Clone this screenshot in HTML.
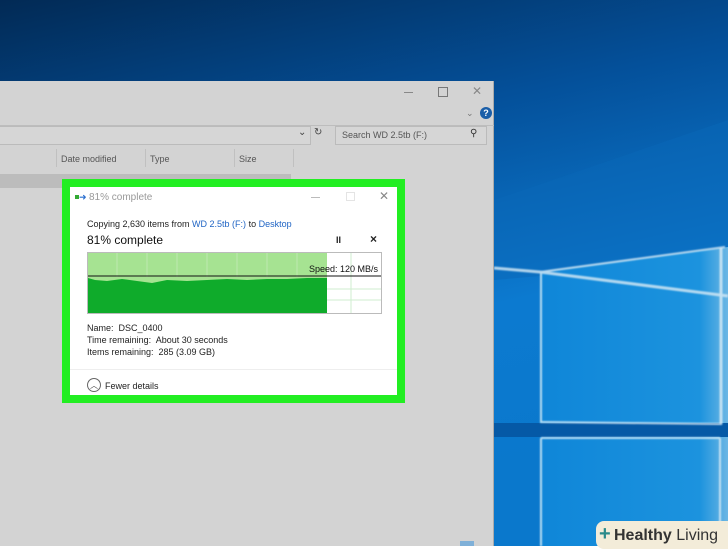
<!DOCTYPE html>
<html><head><meta charset="utf-8"><style>
body{margin:0;width:728px;height:546px;overflow:hidden;position:relative;font-family:"Liberation Sans",sans-serif;}
.abs{position:absolute}
.t{font-size:9px;color:#555}
</style></head><body>
<svg class="abs" style="left:0;top:0" width="728" height="546">
<defs>
<linearGradient id="bg" x1="0" y1="0" x2="0.3" y2="1"><stop offset="0" stop-color="#022a55"/><stop offset="0.35" stop-color="#04509a"/><stop offset="0.7" stop-color="#0c7ad0"/><stop offset="1" stop-color="#0a78cc"/></linearGradient>
<linearGradient id="pane" x1="0" y1="0" x2="1" y2="0"><stop offset="0" stop-color="#0f86d8"/><stop offset="0.85" stop-color="#1c93de"/><stop offset="1" stop-color="#6bb6e4"/></linearGradient>
<filter id="bl"><feGaussianBlur stdDeviation="0.8"/></filter>
</defs>
<rect width="728" height="546" fill="url(#bg)"/>
<polygon points="494,200 728,120 728,260 494,280" fill="#0a67b8" opacity="0.5"/>
<polygon points="540,272 728,247 728,423 540,423" fill="url(#pane)"/>
<rect x="494" y="423" width="234" height="14" fill="#0559a6"/>
<polygon points="540,437 728,437 728,546 540,546" fill="url(#pane)"/>
<g filter="url(#bl)" opacity="0.85">
<polyline points="494,268 540,272 728,296" stroke="#cfe6f4" stroke-width="3" fill="none"/>
<line x1="540" y1="272" x2="725" y2="247" stroke="#d6eaf6" stroke-width="2"/>
<line x1="541" y1="272" x2="541" y2="423" stroke="#d6eaf6" stroke-width="2"/>
<line x1="540" y1="422" x2="722" y2="424" stroke="#d6eaf6" stroke-width="2"/>
<line x1="721" y1="247" x2="721" y2="424" stroke="#d6eaf6" stroke-width="3"/>
<line x1="541" y1="438" x2="720" y2="438" stroke="#d6eaf6" stroke-width="2"/>
<line x1="541" y1="438" x2="541" y2="546" stroke="#d6eaf6" stroke-width="2"/>
<line x1="720" y1="438" x2="720" y2="546" stroke="#d6eaf6" stroke-width="2"/>
</g>
</svg>
<div class="abs" style="left:0;top:81px;width:494px;height:465px;background:#d3d3d3;border-right:1px solid #aaa;box-sizing:border-box">
 <div class="abs" style="left:404px;top:11px;width:9px;height:1px;background:#888"></div>
 <div class="abs" style="left:438px;top:6px;width:8px;height:8px;border:1px solid #777"></div>
 <div class="abs" style="left:472px;top:3px;font-size:12px;color:#888">✕</div>
 <div class="abs" style="left:466px;top:27px;font-size:9px;color:#777">⌄</div>
 <div class="abs" style="left:480px;top:26px;width:12px;height:12px;border-radius:50%;background:#1a5ea8;color:#fff;font-size:9px;text-align:center;line-height:12px;font-weight:bold">?</div>
 <div class="abs" style="left:0;top:44px;width:494px;height:1px;background:#bdbdbd"></div>
 <div class="abs" style="left:0;top:45px;width:310px;height:17px;border:1px solid #bbb;border-left:none;background:#d6d6d6"></div>
 <div class="abs" style="left:298px;top:46px;font-size:10px;color:#444">⌄</div>
 <div class="abs" style="left:314px;top:46px;font-size:10px;color:#444">↻</div>
 <div class="abs" style="left:335px;top:45px;width:150px;height:17px;border:1px solid #bbb;background:#d6d6d6"></div>
 <div class="abs t" style="left:342px;top:49px">Search WD 2.5tb (F:)</div>
 <div class="abs" style="left:470px;top:47px;font-size:10px;color:#333">⚲</div>
 <div class="abs t" style="left:61px;top:73px">Date modified</div>
 <div class="abs t" style="left:150px;top:73px">Type</div>
 <div class="abs t" style="left:239px;top:73px">Size</div>
 <div class="abs" style="left:56px;top:68px;width:1px;height:18px;background:#c0c0c0"></div>
 <div class="abs" style="left:145px;top:68px;width:1px;height:18px;background:#c0c0c0"></div>
 <div class="abs" style="left:234px;top:68px;width:1px;height:18px;background:#c0c0c0"></div>
 <div class="abs" style="left:293px;top:68px;width:1px;height:18px;background:#c0c0c0"></div>
 <div class="abs" style="left:0;top:93px;width:291px;height:14px;background:#bcbcbc"></div>
 <div class="abs" style="left:460px;top:460px;width:14px;height:5px;background:#7fb0d8"></div>
</div>
<div class="abs" style="left:62px;top:179px;width:343px;height:224px;background:#22ee22"></div>
<div class="abs" style="left:70px;top:187px;width:327px;height:208px;background:#fff;font-size:9px;color:#222">
 <div class="abs" style="left:5px;top:8px;width:4px;height:4px;background:#3a3"></div>
 <div class="abs" style="left:9px;top:5px;color:#2a6fd0;font-size:9px">➜</div>
 <div class="abs" style="left:19px;top:5px;color:#999;font-size:10px">81% complete</div>
 <div class="abs" style="left:241px;top:10px;width:9px;height:1px;background:#bbb"></div>
 <div class="abs" style="left:276px;top:5px;width:7px;height:7px;border:1px solid #e4e4e4"></div>
 <div class="abs" style="left:309px;top:2px;color:#888;font-size:12px">✕</div>
 <div class="abs" style="left:17px;top:32px">Copying 2,630 items from <span style="color:#1f64c4">WD 2.5tb (F:)</span> to <span style="color:#1f64c4">Desktop</span></div>
 <div class="abs" style="left:17px;top:46px;font-size:12px;color:#111">81% complete</div>
 <div class="abs" style="left:266px;top:48px;font-size:9px;font-weight:bold">II</div>
 <div class="abs" style="left:300px;top:45px;font-size:12px;font-weight:bold">×</div>
 <svg class="abs" style="left:17px;top:65px" width="295" height="62">
  <rect x="0.5" y="0.5" width="294" height="61" fill="#fff" stroke="#bbb"/>
  <rect x="1" y="1" width="239" height="60" fill="#a6e392"/>
  <g stroke="#bfe8b0" stroke-width="1">
   <line x1="30" y1="1" x2="30" y2="25"/><line x1="60" y1="1" x2="60" y2="25"/><line x1="90" y1="1" x2="90" y2="25"/><line x1="120" y1="1" x2="120" y2="25"/><line x1="150" y1="1" x2="150" y2="25"/><line x1="180" y1="1" x2="180" y2="25"/><line x1="210" y1="1" x2="210" y2="25"/>
  </g>
  <g stroke="#cfeecf"><line x1="264" y1="1" x2="264" y2="61"/><line x1="240" y1="37" x2="294" y2="37"/><line x1="240" y1="48" x2="294" y2="48"/></g>
  <path d="M1,26 L8,28 L20,29 L35,27 L50,29 L65,31 L80,28 L100,29 L120,28 L140,27 L160,28 L180,27 L200,27 L220,26 L240,26 L240,61 L1,61 Z" fill="#0fab2b"/>
  <line x1="1" y1="24" x2="294" y2="24" stroke="#111" stroke-width="1"/>
  <text x="291" y="20" text-anchor="end" font-size="9" fill="#111" font-family="Liberation Sans">Speed: 120 MB/s</text>
 </svg>
 <div class="abs" style="left:17px;top:136px">Name:&nbsp; DSC_0400</div>
 <div class="abs" style="left:17px;top:148px">Time remaining:&nbsp; About 30 seconds</div>
 <div class="abs" style="left:17px;top:160px">Items remaining:&nbsp; 285 (3.09 GB)</div>
 <div class="abs" style="left:0;top:182px;width:327px;height:1px;background:#eee"></div>
 <div class="abs" style="left:17px;top:191px;width:12px;height:12px;border:1px solid #666;border-radius:50%;font-size:8px;text-align:center;line-height:13px;color:#444">︿</div>
 <div class="abs" style="left:35px;top:194px">Fewer details</div>
</div>
<div class="abs" style="left:596px;top:521px;width:140px;height:28px;background:#f3ecd9;border-radius:8px"></div>
<div class="abs" style="left:599px;top:524px;font-size:20px;font-weight:bold;color:#2a8a8a;line-height:20px">+</div>
<div class="abs" style="left:614px;top:526px;font-size:16px;color:#333;line-height:20px"><b>Healthy</b> Living</div>
</body></html>
